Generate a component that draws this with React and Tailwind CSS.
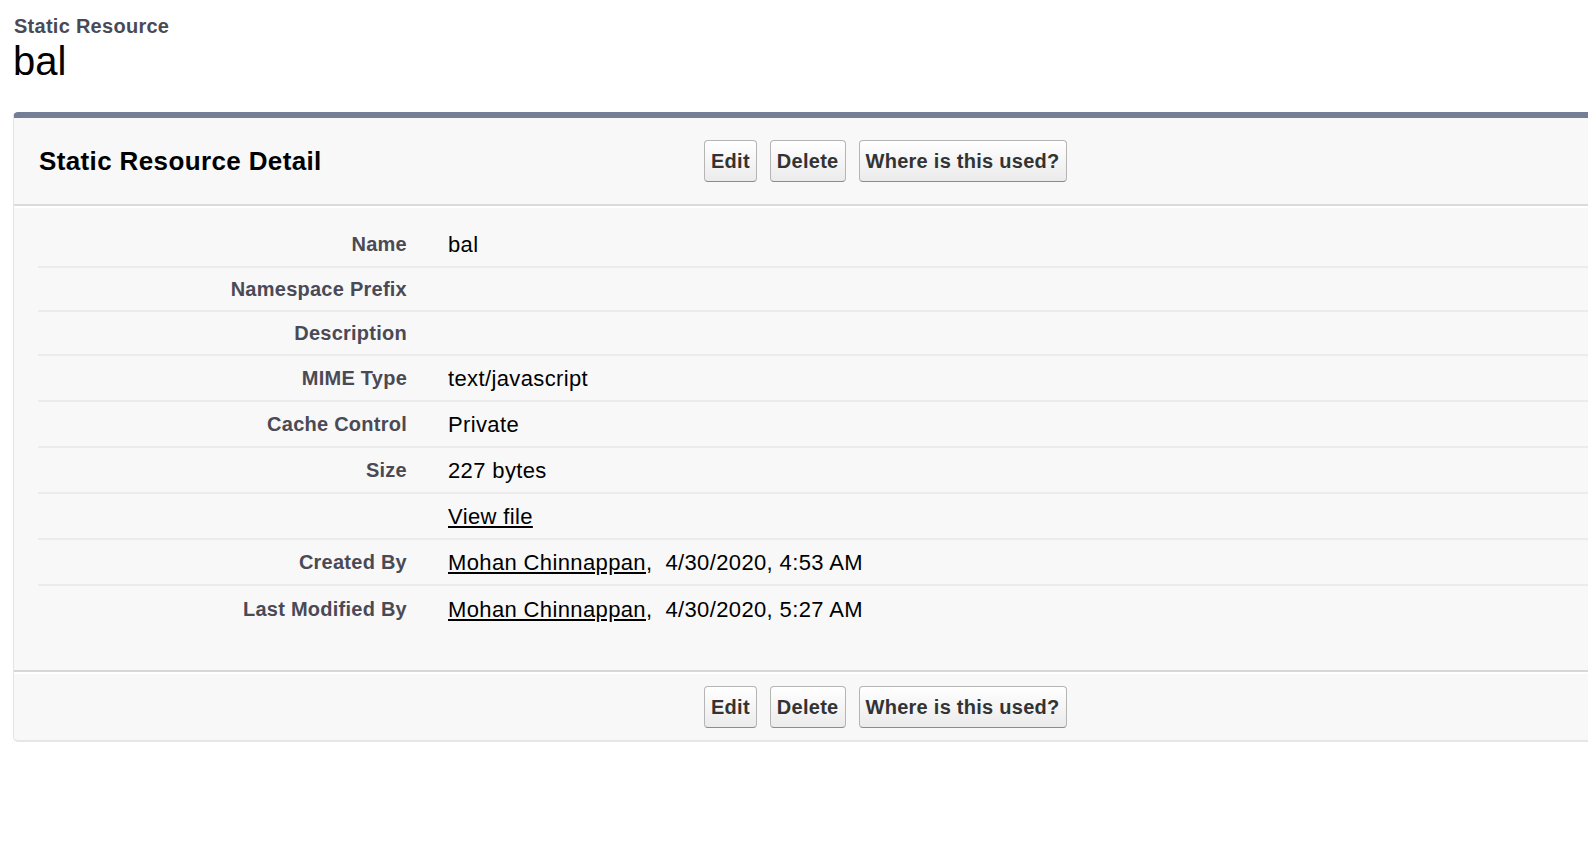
import React from 'react';

const rows = [
  { label: 'Name', value: 'bal' },
  { label: 'Namespace Prefix', value: null },
  { label: 'Description', value: null },
  { label: 'MIME Type', value: 'text/javascript' },
  { label: 'Cache Control', value: 'Private' },
  { label: 'Size', value: '227 bytes' },
  { label: '', value: 'view' },
  { label: 'Created By', value: 'created' },
  { label: 'Last Modified By', value: 'modified' },
];

function Btn({ children }) {
  return (
    <button className="h-[42px] px-[6px] rounded-[4px] border border-[#b5b5b5] border-b-[#8c8c8c] bg-gradient-to-b from-white to-[#ebebeb] text-[20px] tracking-[0.27px] font-bold text-[#333] leading-none">
      {children}
    </button>
  );
}

function Buttons() {
  return (
    <div className="flex items-center gap-[13px]">
      <Btn>Edit</Btn>
      <Btn>Delete</Btn>
      <Btn>Where is this used?</Btn>
    </div>
  );
}

function Value({ value }) {
  if (value === 'view') {
    return <a href="#" className="underline text-black">View file</a>;
  }
  if (value === 'created' || value === 'modified') {
    return (
      <span>
        <a href="#" className="underline text-black">Mohan Chinnappan</a>,&nbsp; 4/30/2020, {value === 'created' ? '4:53 AM' : '5:27 AM'}
      </span>
    );
  }
  return <span>{value}</span>;
}

export default function App() {
  return (
    <div className="min-h-screen bg-white overflow-hidden font-['Liberation_Sans',Arial,sans-serif] text-black">
      <div className="pl-[14px] pt-[15px]">
        <h1 className="text-[20px] leading-[23px] tracking-[0.27px] font-bold text-[#4a4a56]">Static Resource</h1>
        <h2 className="text-[40px] leading-[46px] -ml-[1px]">bal</h2>
      </div>

      <div className="ml-[13px] mt-[28px] w-[1600px] bg-[#f8f8f8] border-t-[6px] border-t-[#747e96] border-l border-l-[#e3e5e7] border-b-2 border-b-[#e6e6e6] rounded-[5px]">
        <div className="h-[88px] flex items-center pl-[25px] border-b-2 border-[#dbdbdb]">
          <h3 className="w-[665px] text-[26px] tracking-[0.37px] font-bold leading-none">Static Resource Detail</h3>
          <Buttons />
        </div>

        <div className="border-t-2 border-white pt-[14px] pb-[38px] pl-[24px]">
          {rows.map((r, i) => (
            <div
              key={i}
              className={`flex items-center ${r.value ? 'h-[46px]' : 'h-[44px]'} ${i < rows.length - 1 ? 'border-b-2 border-[#ececec]' : ''}`}
            >
              <div className="w-[369px] text-right text-[20px] tracking-[0.25px] font-bold text-[#4a4a56]">{r.label}</div>
              <div className="pl-[41px] text-[22px] tracking-[0.37px]">{r.value && <Value value={r.value} />}</div>
            </div>
          ))}
        </div>

        <div className="border-t-2 border-[#d8d8d8]">
          <div className="h-[68px] flex items-center pl-[25px] border-t-2 border-white">
            <div className="w-[665px]" />
            <Buttons />
          </div>
        </div>
      </div>
    </div>
  );
}
